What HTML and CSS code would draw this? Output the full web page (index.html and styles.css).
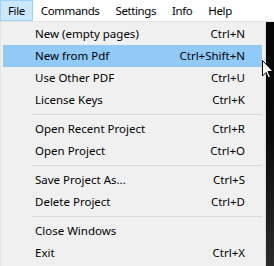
FILE: index.html
```html
<!DOCTYPE html>
<html>

<head>
  <meta charset="UTF-8">
  <title>File menu</title>
  <link rel="stylesheet" href="styles.css">
</head>

<body>
  <div class="menubar">
    <div class="menubar-item active">File</div>
    <div class="menubar-item">Commands</div>
    <div class="menubar-item">Settings</div>
    <div class="menubar-item">Info</div>
    <div class="menubar-item">Help</div>
  </div>
  <div class="window">
    <div class="dropdown">
      <div class="item"><span>New (empty pages)</span><span class="key">Ctrl+N</span></div>
      <div class="item hover"><span>New from Pdf</span><span class="key">Ctrl+Shift+N</span></div>
      <div class="item"><span>Use Other PDF</span><span class="key">Ctrl+U</span></div>
      <div class="item"><span>License Keys</span><span class="key">Ctrl+K</span></div>
      <div class="sep"></div>
      <div class="item"><span>Open Recent Project</span><span class="key">Ctrl+R</span></div>
      <div class="item"><span>Open Project</span><span class="key">Ctrl+O</span></div>
      <div class="sep"></div>
      <div class="item"><span>Save Project As...</span><span class="key">Ctrl+S</span></div>
      <div class="item"><span>Delete Project</span><span class="key">Ctrl+D</span></div>
      <div class="sep"></div>
      <div class="item"><span>Close Windows</span><span class="key"></span></div>
      <div class="item"><span>Exit</span><span class="key">Ctrl+X</span></div>
    </div>
    <div class="backdrop"></div>
    <svg class="pointer" width="12" height="19" viewBox="0 0 12 19">
      <path d="M0.5 0.5 L0.5 16 L4 12.5 L6.5 18 L8.5 17 L6 11.5 L11 11.5 Z" fill="#fff" stroke="#000" stroke-width="1" />
    </svg>
  </div>
</body>

</html>
```

FILE: styles.css
```css
* {
  margin: 0;
  padding: 0;
  box-sizing: border-box;
}

body {
  width: 274px;
  height: 266px;
  overflow: hidden;
  background-color: #fff;
  font-family: "Noto Sans", "Liberation Sans", Arial, sans-serif;
  font-size: 11.5px;
  color: #000;
}

.menubar {
  display: flex;
  height: 22px;
  background-color: #fff;
  border-bottom: 1px solid #e3e3e3;
}

.menubar-item {
  height: 21px;
  line-height: 19px;
  padding: 0 7px;
  border: 1px solid transparent;
  letter-spacing: -0.4px;
}

.menubar-item.active {
  background-color: #cce8ff;
  border-color: #99d1ff;
}

.window {
  position: relative;
  display: flex;
  height: 244px;
}

.dropdown {
  width: 266px;
  background-color: #f0f0f0;
  border-left: 1px solid #e6e6e6;
  border-right: 1px solid #dcdcdc;
  padding: 1px 3px 0 2px;
}

.item {
  display: flex;
  justify-content: space-between;
  height: 22px;
  line-height: 21px;
  padding: 0 17px 0 32px;
}

.item.hover {
  background-color: #91c9f7;
}

.sep {
  height: 7px;
  margin-left: 29px;
  border-top: 3px solid transparent;
  border-bottom: 3px solid transparent;
  background-color: #d7d7d7;
  background-clip: padding-box;
}

.backdrop {
  flex: 1;
  background: linear-gradient(#050505, #0a0a0a 45%, #2b2b2b);
}

.pointer {
  position: absolute;
  left: 262px;
  top: 38px;
}
```
